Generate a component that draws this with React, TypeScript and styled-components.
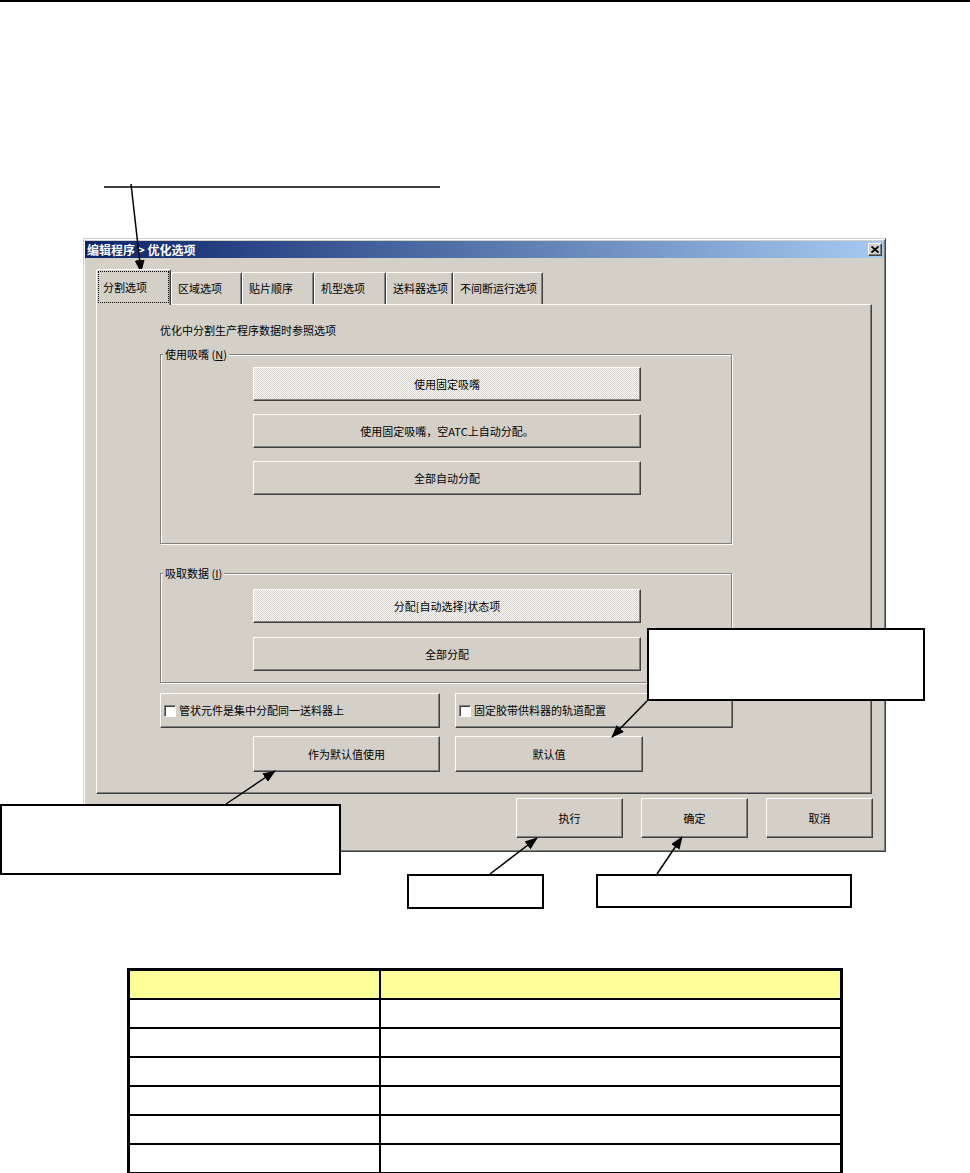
import React from "react";
import styled, { createGlobalStyle, css } from "styled-components";

const face = "#d4d0c8";

const GlobalStyle = createGlobalStyle`
  html, body {
    margin: 0;
    padding: 0;
    background: #fff;
  }
  body {
    font-family: "Noto Sans CJK SC", "Liberation Sans", sans-serif;
    color: #000;
  }
`;

const raised = css`
  border: 1px solid;
  border-color: #fff #404040 #404040 #fff;
  box-shadow: inset -1px -1px 0 #808080;
`;

const Page = styled.div`
  position: relative;
  width: 970px;
  height: 1173px;
  overflow: hidden;
`;

const TopRule = styled.div`
  height: 2px;
  background: #000;
`;

const Dialog = styled.div`
  margin: 236px 0 0 83px;
  width: 803px;
  height: 614px;
  box-sizing: border-box;
  background: ${face};
  border: 1px solid;
  border-color: ${face} #404040 #404040 ${face};
  box-shadow: inset 1px 1px 0 #fff, inset -1px -1px 0 #808080;
  padding: 2px 1px 0 1px;
  display: flex;
  flex-direction: column;
`;

const TitleBar = styled.div`
  height: 17px;
  display: flex;
  align-items: center;
  justify-content: space-between;
  padding: 0 2px 0 2px;
  background: linear-gradient(to right, #0a246a, #a6caf0);
  color: #fff;
  font-size: 12px;
  font-weight: bold;
  line-height: 17px;
  white-space: pre;
`;

const CloseButton = styled.div`
  width: 14px;
  height: 13px;
  box-sizing: border-box;
  background: ${face};
  ${raised};
  display: flex;
  align-items: center;
  justify-content: center;
`;

const TabStrip = styled.div`
  margin: 11px 0 0 11px;
  height: 35px;
  display: flex;
  align-items: flex-end;
  position: relative;
  z-index: 1;
`;

const Tab = styled.div<{ $w: number; $active?: boolean }>`
  width: ${(p) => p.$w}px;
  height: ${(p) => (p.$active ? 36 : 32)}px;
  margin-bottom: ${(p) => (p.$active ? -1 : 0)}px;
  box-sizing: border-box;
  background: ${face};
  border-top: 1px solid #fff;
  border-left: 1px solid #fff;
  border-right: 1px solid #404040;
  box-shadow: inset -1px 0 0 #808080;
  border-radius: 2px 2px 0 0;
  display: flex;
  align-items: center;
  padding-left: 6px;
  font-size: 11px;
  line-height: 13px;
  white-space: nowrap;
  ${(p) =>
    p.$active &&
    css`
      outline: 1px dotted #000;
      outline-offset: -3px;
    `}
`;

const Panel = styled.div`
  margin-left: 11px;
  width: 776px;
  height: 490px;
  box-sizing: border-box;
  ${raised};
  padding-left: 63px;
  display: flex;
  flex-direction: column;
`;

const Intro = styled.div`
  margin-top: 19px;
  font-size: 11px;
  line-height: 13px;
`;

const Group = styled.div<{ $top: number; $h: number; $pad: number; $gap: number }>`
  position: relative;
  margin-top: ${(p) => p.$top}px;
  width: 572px;
  height: ${(p) => p.$h}px;
  box-sizing: border-box;
  border: 1px solid #808080;
  box-shadow: inset 1px 1px 0 #fff, 1px 1px 0 #fff;
  padding: ${(p) => p.$pad}px 0 0 92px;
  display: flex;
  flex-direction: column;
  gap: ${(p) => p.$gap}px;
`;

const Legend = styled.span`
  position: absolute;
  top: -7px;
  left: 2px;
  padding: 0 2px;
  background: ${face};
  font-size: 11px;
  line-height: 13px;
  white-space: pre;
`;

const Button = styled.div<{ $w: number; $h: number; $hatched?: boolean }>`
  width: ${(p) => p.$w}px;
  height: ${(p) => p.$h}px;
  box-sizing: border-box;
  ${raised};
  background: ${(p) =>
    p.$hatched
      ? `repeating-conic-gradient(#fff 0 25%, ${face} 0 50%) 0 0 / 2px 2px`
      : face};
  display: flex;
  align-items: center;
  justify-content: center;
  font-size: 11px;
  line-height: 13px;
  white-space: nowrap;
  flex-shrink: 0;
`;

const CheckButton = styled(Button)`
  justify-content: flex-start;
  padding-left: 3px;
  gap: 3px;
`;

const CheckBox = styled.span`
  width: 12px;
  height: 12px;
  box-sizing: border-box;
  background: #fff;
  border: 1px solid;
  border-color: #808080 #fff #fff #808080;
  box-shadow: inset 1px 1px 0 #404040;
`;

const Row = styled.div<{ $top: number; $left?: number }>`
  margin-top: ${(p) => p.$top}px;
  padding-left: ${(p) => p.$left ?? 0}px;
  display: flex;
  gap: 15px;
`;

const ActionRow = styled.div`
  margin: 4px 11px 0 0;
  display: flex;
  justify-content: flex-end;
  gap: 18px;
`;

const SpecTable = styled.table`
  margin: 116px 0 0 127px;
  width: 716px;
  border-collapse: collapse;
  table-layout: fixed;
  border: 3px solid #000;
`;

const KeyCol = styled.col`
  width: 251px;
`;

const Cell = styled.td<{ $head?: boolean }>`
  border: 2px solid #000;
  height: 27px;
  padding: 0;
  background: ${(p) => (p.$head ? "#ffff99" : "#fff")};
`;

const Callout = styled.div<{ $x: number; $y: number; $w: number; $h: number }>`
  position: absolute;
  left: ${(p) => p.$x}px;
  top: ${(p) => p.$y}px;
  width: ${(p) => p.$w}px;
  height: ${(p) => p.$h}px;
  box-sizing: border-box;
  border: 2px solid #000;
  background: #fff;
`;

const Overlay = styled.svg`
  position: absolute;
  left: 0;
  top: 0;
  pointer-events: none;
`;

const tabs = [
  { label: "分割选项", w: 75 },
  { label: "区域选项", w: 71 },
  { label: "贴片顺序", w: 72 },
  { label: "机型选项", w: 72 },
  { label: "送料器选项", w: 67 },
  { label: "不间断运行选项", w: 90 },
];

const arrows = [
  [131, 184, 141, 272],
  [647, 701, 612, 737],
  [226, 804, 275, 771],
  [490, 874, 537, 838],
  [657, 874, 682, 837],
];

export default function App() {
  return (
    <Page>
      <GlobalStyle />
      <TopRule />
      <Dialog>
        <TitleBar>
          <span>{"编辑程序 > 优化选项"}</span>
          <CloseButton>
            <svg width="8" height="7" viewBox="0 0 8 7">
              <path d="M0.5 0.5 L7.5 6.5 M7.5 0.5 L0.5 6.5" stroke="#000" strokeWidth="1.8" />
            </svg>
          </CloseButton>
        </TitleBar>

        <TabStrip>
          {tabs.map((t, i) => (
            <Tab key={t.label} $w={t.w} $active={i === 0}>
              {t.label}
            </Tab>
          ))}
        </TabStrip>

        <Panel>
          <Intro>优化中分割生产程序数据时参照选项</Intro>

          <Group $top={17} $h={190} $pad={12} $gap={13}>
            <Legend>
              使用吸嘴 (<u>N</u>)
            </Legend>
            <Button $w={388} $h={34} $hatched>
              使用固定吸嘴
            </Button>
            <Button $w={388} $h={34}>
              使用固定吸嘴，空ATC上自动分配。
            </Button>
            <Button $w={388} $h={34}>
              全部自动分配
            </Button>
          </Group>

          <Group $top={29} $h={110} $pad={15} $gap={14}>
            <Legend>
              吸取数据 (<u>I</u>)
            </Legend>
            <Button $w={388} $h={34} $hatched>
              分配[自动选择]状态项
            </Button>
            <Button $w={388} $h={34}>
              全部分配
            </Button>
          </Group>

          <Row $top={10}>
            <CheckButton $w={280} $h={35}>
              <CheckBox />
              管状元件是集中分配同一送料器上
            </CheckButton>
            <CheckButton $w={278} $h={35}>
              <CheckBox />
              固定胶带供料器的轨道配置
            </CheckButton>
          </Row>

          <Row $top={8} $left={93}>
            <Button $w={187} $h={36}>
              作为默认值使用
            </Button>
            <Button $w={188} $h={36}>
              默认值
            </Button>
          </Row>
        </Panel>

        <ActionRow>
          <Button $w={107} $h={40}>
            执行
          </Button>
          <Button $w={107} $h={40}>
            确定
          </Button>
          <Button $w={107} $h={40}>
            取消
          </Button>
        </ActionRow>
      </Dialog>

      <SpecTable>
        <colgroup>
          <KeyCol />
          <col />
        </colgroup>
        <tbody>
          {Array.from({ length: 7 }).map((_, i) => (
            <tr key={i}>
              <Cell $head={i === 0} />
              <Cell $head={i === 0} />
            </tr>
          ))}
        </tbody>
      </SpecTable>

      <Callout $x={647} $y={628} $w={278} $h={73} />
      <Callout $x={0} $y={804} $w={341} $h={71} />
      <Callout $x={407} $y={874} $w={137} $h={35} />
      <Callout $x={596} $y={874} $w={256} $h={34} />

      <Overlay width="970" height="1173" viewBox="0 0 970 1173">
        <defs>
          <marker
            id="head"
            markerUnits="userSpaceOnUse"
            markerWidth="13"
            markerHeight="10"
            refX="12"
            refY="5"
            orient="auto"
          >
            <path d="M0 0 L13 5 L0 10 Z" fill="#000" />
          </marker>
        </defs>
        <line x1="104" y1="187" x2="440" y2="187" stroke="#000" strokeWidth="1.5" />
        {arrows.map(([x1, y1, x2, y2], i) => (
          <line
            key={i}
            x1={x1}
            y1={y1}
            x2={x2}
            y2={y2}
            stroke="#000"
            strokeWidth="1.5"
            markerEnd="url(#head)"
          />
        ))}
      </Overlay>
    </Page>
  );
}
